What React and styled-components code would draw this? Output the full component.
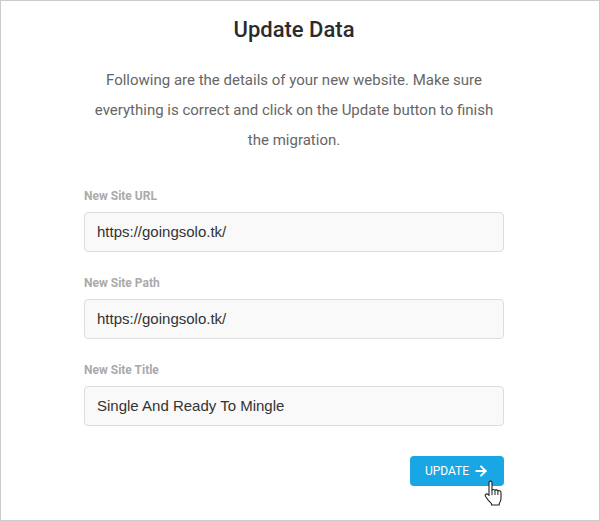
import React from 'react'
import styled, { createGlobalStyle } from 'styled-components'
import { ArrowRight } from 'lucide-react'

const GlobalStyle = createGlobalStyle`
  html, body {
    margin: 0;
    padding: 0;
    background: #fff;
  }
  * {
    box-sizing: border-box;
  }
`

const Frame = styled.div`
  width: 600px;
  height: 521px;
  border: 1px solid #ccc;
  background: #fff;
  padding: 14px 95px 0 83px;
  font-family: Roboto, sans-serif;
`

const Title = styled.h1`
  margin: 0;
  text-align: center;
  font-size: 22px;
  font-weight: 500;
  line-height: 30px;
  color: #2b2b2b;
`

const Intro = styled.p`
  margin: 20px 0 0;
  text-align: center;
  font-size: 15px;
  line-height: 30px;
  color: #666;
`

const Form = styled.form`
  display: flex;
  flex-direction: column;
  gap: 23px;
  margin-top: 33px;
`

const Field = styled.label`
  display: flex;
  flex-direction: column;
  gap: 8px;
`

const LabelText = styled.span`
  font-size: 12px;
  font-weight: 700;
  line-height: 16px;
  color: #aaa;
`

const Input = styled.input`
  width: 100%;
  height: 40px;
  padding: 0 12px 2px;
  border: 1px solid #ddd;
  border-radius: 4px;
  background: #f9f9f9;
  font-family: "Liberation Sans", Arial, sans-serif;
  font-size: 15px;
  color: #333;
  outline: none;
`

const Actions = styled.div`
  display: flex;
  justify-content: flex-end;
  margin-top: 7px;
`

const Button = styled.button`
  position: relative;
  display: flex;
  align-items: center;
  justify-content: center;
  gap: 4px;
  width: 94px;
  height: 30px;
  padding: 0;
  border: none;
  border-radius: 4px;
  background: #18a7e4;
  font-family: Roboto, sans-serif;
  font-size: 12px;
  font-weight: 400;
  color: #fff;
  text-transform: uppercase;
`

const Pointer = styled.svg`
  position: absolute;
  left: 74px;
  top: 24px;
  width: 20px;
  height: 26px;
`

const fields = [
  { label: 'New Site URL', value: 'https://goingsolo.tk/' },
  { label: 'New Site Path', value: 'https://goingsolo.tk/' },
  { label: 'New Site Title', value: 'Single And Ready To Mingle' },
]

export default function App() {
  return (
    <Frame>
      <GlobalStyle />
      <Title>Update Data</Title>
      <Intro>
        Following are the details of your new website. Make sure everything is correct and click on the Update button to finish the migration.
      </Intro>
      <Form onSubmit={e => e.preventDefault()}>
        {fields.map(field => (
          <Field key={field.label}>
            <LabelText>{field.label}</LabelText>
            <Input type="text" defaultValue={field.value} readOnly />
          </Field>
        ))}
        <Actions>
          <Button type="submit">
            Update
            <ArrowRight size={16} strokeWidth={2.8} />
            <Pointer viewBox="0 0 20 26" aria-hidden="true">
              <path
                d="M5 2.500c0-1.800 3-1.800 3 0v7.700c.4-1 2.700-1 3 .3.400-1 2.700-.9 2.900.5.500-.8 3.100-.5 3.100 1.300v6.200c0 2.200-.8 3.600-1.800 5V25H7.500v-1.300C5.500 22 3.500 19.500 1.600 16.500c-1.200-2 1.200-3.500 2.500-2L5 15.500z"
                fill="#fff"
                stroke="#222"
                strokeWidth="1.1"
                strokeLinejoin="round"
              />
              <path d="M8 10.200v5M11 10.500v4.500M13.900 11v4" stroke="#222" strokeWidth="1" fill="none" />
            </Pointer>
          </Button>
        </Actions>
      </Form>
    </Frame>
  )
}
